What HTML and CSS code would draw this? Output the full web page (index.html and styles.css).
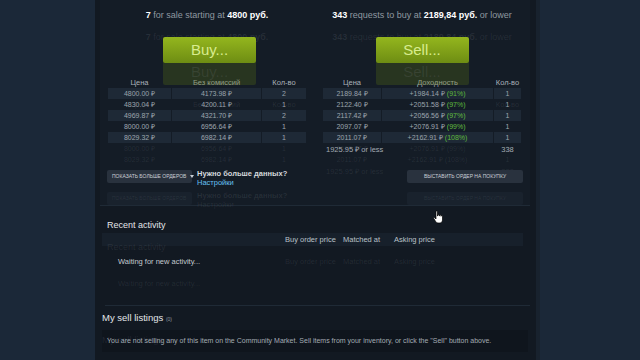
FILE: index.html
```html
<!DOCTYPE html>
<html lang="ru">
<head>
    <meta charset="UTF-8">
    <meta name="viewport" content="width=device-width, initial-scale=1.0">
    <title>Market</title>
    <link rel="stylesheet" href="styles.css">
</head>
<body>

<div class="page">
    <div class="market">
        <div class="market-cols">
            <div class="market-col">
                <div class="summary"><b>7</b> for sale starting at <b>4800 руб.</b></div>
                <a class="btn-green btn-buy">Buy...</a>
                <table class="orders">
                    <colgroup><col style="width:63px"><col style="width:89px"><col style="width:44px"></colgroup>
                    <tr><th>Цена</th><th>Без комиссий</th><th>Кол-во</th></tr>
                    <tr class="odd"><td>4800.00 ₽</td><td>4173.98 ₽</td><td>2</td></tr>
                    <tr><td>4830.04 ₽</td><td>4200.11 ₽</td><td>1</td></tr>
                    <tr class="odd"><td>4969.87 ₽</td><td>4321.70 ₽</td><td>2</td></tr>
                    <tr><td>8000.00 ₽</td><td>6956.64 ₽</td><td>1</td></tr>
                    <tr class="odd"><td>8029.32 ₽</td><td>6982.14 ₽</td><td>1</td></tr>
                </table>
            </div>
            <div class="market-col">
                <div class="summary"><b>343</b> requests to buy at <b>2189,84 руб.</b> or lower</div>
                <a class="btn-green">Sell...</a>
                <table class="orders">
                    <colgroup><col style="width:58px"><col style="width:111px"><col style="width:27px"></colgroup>
                    <tr><th>Цена</th><th>Доходность</th><th>Кол-во</th></tr>
                    <tr class="odd"><td>2189.84 ₽</td><td>+1984.14 ₽ <span class="pct">(91%)</span></td><td>1</td></tr>
                    <tr><td>2122.40 ₽</td><td>+2051.58 ₽ <span class="pct">(97%)</span></td><td>1</td></tr>
                    <tr class="odd"><td>2117.42 ₽</td><td>+2056.56 ₽ <span class="pct">(97%)</span></td><td>1</td></tr>
                    <tr><td>2097.07 ₽</td><td>+2076.91 ₽ <span class="pct">(99%)</span></td><td>1</td></tr>
                    <tr class="odd"><td>2011.07 ₽</td><td>+2162.91 ₽ <span class="pct">(108%)</span></td><td>1</td></tr>
                    <tr class="last"><td colspan="2">1925.95 ₽ or less</td><td>338</td></tr>
                </table>
            </div>
        </div>

        <div class="market-controls">
            <div class="more">
                <a class="btn-dark btn-more">Показать больше ордеров <span class="caret"></span></a>
                <div class="need">
                    Нужно больше данных?
                    <a>Настройки</a>
                </div>
            </div>
            <a class="btn-dark btn-order">Выставить ордер на покупку</a>
        </div>
    </div>

    <div class="activity">
        <div class="section-title">Recent activity</div>
        <div class="activity-head">
            <span></span>
            <span>Buy order price</span>
            <span>Matched at</span>
            <span>Asking price</span>
        </div>
        <div class="waiting">Waiting for new activity...</div>
    </div>

    <div class="listings">
        <div class="section-title big">My sell listings <span class="count">(0)</span></div>
        <div class="listings-box">You are not selling any of this item on the Community Market. Sell items from your inventory, or click the "Sell" button above.</div>
    </div>
</div>

<svg class="cursor" width="11" height="14" viewBox="0 0 11 14">
    <path d="M3 1.5c0-.8 1.5-.8 1.5 0V6h.3V5c0-.8 1.4-.8 1.4 0v1h.3v-.6c0-.8 1.4-.8 1.4 0v.8h.2c0-.8 1.4-.8 1.4 0V10c0 1.5-1 3-2.5 3H5C3.8 13 3 12 2.3 11L.8 8.5c-.4-.7.5-1.3 1-.7L3 9V1.5z" fill="#fff" stroke="#000" stroke-width=".7"/>
</svg>

</body>
</html>
```

FILE: styles.css
```css
body {
    margin: 0;
    background-color: #1b2838;
    font-family: "Liberation Sans", Arial, sans-serif;
    color: #9aa3ab;
    position: relative;
    height: 360px;
    overflow: hidden;
}

.page {
    width: 441px;
    height: 360px;
    margin-left: 95px;
    background-color: #121922;
    border-right: 4px solid #18222e;
    /* the screenshot has a motion ghost ~22px below everything */
    text-shadow: 0 22px 0 rgba(170, 180, 190, 0.12);
}

a {
    cursor: pointer;
}

.market {
    margin: 0 6px 0 5px;
    padding: 10px 8px 18px 7px;
    background-color: #141c26;
    border-bottom: 1px solid #1f2a36;
}

.market-cols {
    display: flex;
    gap: 15px;
}

.market-col {
    width: 200px;
    display: flex;
    flex-direction: column;
    align-items: center;
}

.summary {
    font-size: 9px;
    line-height: 10px;
    color: #8f98a0;
    white-space: nowrap;
}

.summary b {
    color: #fff;
}

.btn-green {
    position: relative;
    margin-top: 17px;
    width: 93px;
    height: 26px;
    line-height: 26px;
    text-align: center;
    font-size: 15px;
    color: #d8ec8e;
    background: linear-gradient(#94b61e, #6e8d13);
    border-radius: 2px;
    box-shadow: 0 22px 0 rgba(90, 112, 20, 0.3);
}

.btn-buy {
    margin-left: 5px;
}

.orders {
    margin-top: 14px;
    width: 200px;
    table-layout: fixed;
    border-collapse: separate;
    border-spacing: 1px 0;
    font-size: 7px;
}

.orders th {
    height: 11px;
    padding: 0;
    font-size: 7.5px;
    font-weight: normal;
    line-height: 11px;
    color: #a9b1b9;
}

.orders td {
    height: 11px;
    padding: 0;
    line-height: 11px;
    text-align: center;
    white-space: nowrap;
}

.orders tr.odd td {
    background-color: #1e2936;
}

.orders tr.last td {
    height: 12px;
    font-size: 7.5px;
    color: #a3abb3;
}

.orders tr.last td:first-child {
    text-align: left;
    padding-left: 3px;
}

.pct {
    color: #5dba3b;
}

.market-controls {
    display: flex;
    justify-content: space-between;
    align-items: flex-start;
    margin-top: 15px;
}

.more {
    display: flex;
    align-items: flex-start;
    gap: 5px;
}

.btn-dark {
    display: block;
    box-sizing: border-box;
    height: 13px;
    line-height: 13px;
    padding: 0 5px;
    background-color: #29323e;
    color: #c9cfd5;
    font-size: 5px;
    text-transform: uppercase;
    text-align: center;
    border-radius: 2px;
    box-shadow: 0 22px 0 rgba(40, 50, 62, 0.3);
    white-space: nowrap;
}

.btn-more {
    width: 85px;
}

.btn-order {
    width: 116px;
    margin-right: -1px;
}

.caret {
    display: inline-block;
    margin-left: 2px;
    border-left: 2.5px solid transparent;
    border-right: 2.5px solid transparent;
    border-top: 3px solid #c9cfd5;
    vertical-align: middle;
}

.need {
    margin-top: -1px;
    font-size: 7.5px;
    line-height: 9px;
    font-weight: bold;
    color: #d5d9dd;
}

.need a {
    display: block;
    font-weight: normal;
    color: #66c0f4;
}

.activity {
    height: 86px;
    margin: 0 6px 0 10px;
    padding: 13px 0 0 2px;
    border-bottom: 1px solid #1f2a36;
}

.section-title {
    font-size: 9px;
    line-height: 12px;
    color: #e3e6e9;
}

.section-title.big {
    font-size: 9.5px;
}

.count {
    font-size: 5px;
    color: #8f98a0;
}

.activity-head {
    display: grid;
    grid-template-columns: 183px 58px 51px auto;
    height: 13px;
    margin: 2px 7px 0 -5px;
    background-color: #17202b;
    font-size: 7.5px;
    line-height: 13px;
    color: #b9c0c7;
}

.waiting {
    margin: 11px 0 0 11px;
    font-size: 7.5px;
    line-height: 10px;
    color: #c3c9cf;
}

.listings {
    padding: 6px 0 0 7px;
}

.listings-box {
    margin: 5px 8px 0 0;
    padding: 5px;
    background-color: #0f151d;
    font-size: 7px;
    line-height: 12px;
    color: #a3abb3;
    white-space: nowrap;
}

.cursor {
    position: absolute;
    left: 433px;
    top: 210px;
}
```
